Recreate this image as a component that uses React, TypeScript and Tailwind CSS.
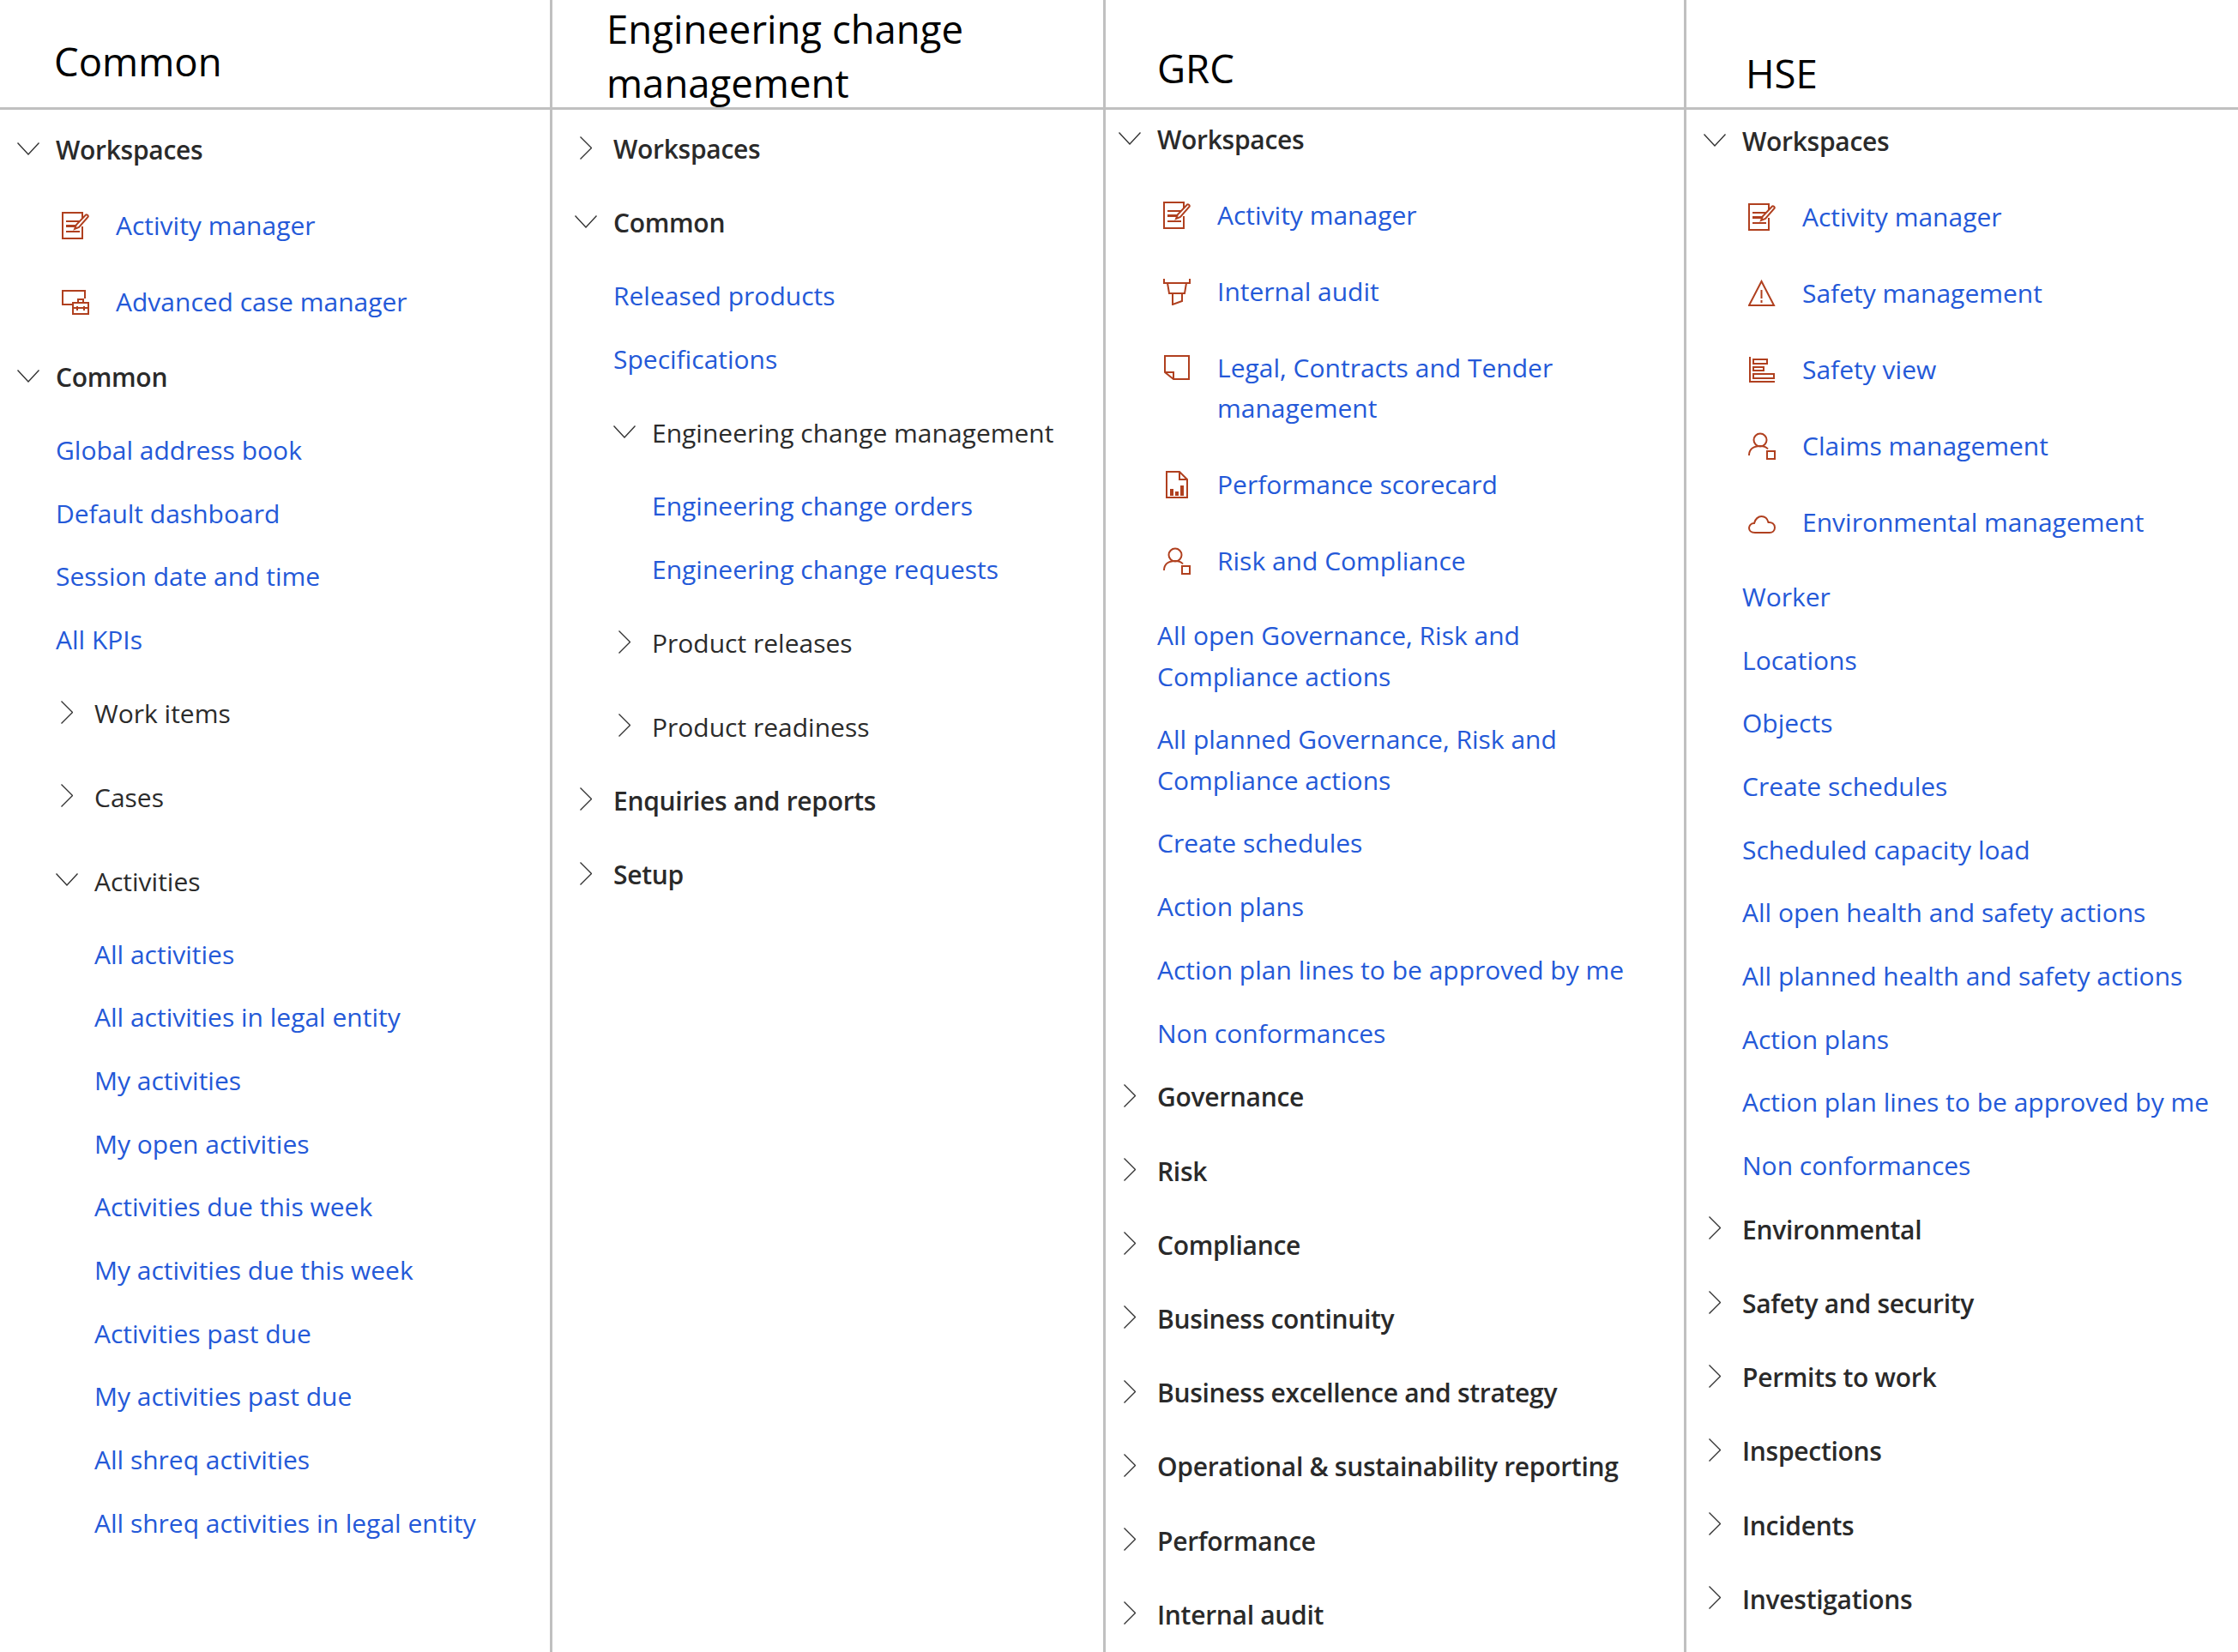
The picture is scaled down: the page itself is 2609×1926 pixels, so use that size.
import { ReactNode } from 'react';

type Row =
  | { kind: 'heading' | 'sub'; label: string; open?: boolean }
  | { kind: 'link' | 'sublink'; label: string }
  | { kind: 'icon'; label: string; icon: IconName };

type IconName = 'activity' | 'caseMgr' | 'audit' | 'note' | 'scorecard' | 'person' | 'warning' | 'view' | 'cloud';

interface Column {
  title: string;
  headerClass: string;
  bodyClass: string;
  rows: Row[];
}

const h = (label: string, open = false): Row => ({ kind: 'heading', label, open });
const s = (label: string, open = false): Row => ({ kind: 'sub', label, open });
const l = (label: string): Row => ({ kind: 'link', label });
const sl = (label: string): Row => ({ kind: 'sublink', label });
const i = (label: string, icon: IconName): Row => ({ kind: 'icon', label, icon });

const columns: Column[] = [
  {
    title: 'Common',
    headerClass: 'pt-[40px] pl-[63px]',
    bodyClass: 'pt-[23px] pl-[20px]',
    rows: [
      h('Workspaces', true),
      i('Activity manager', 'activity'),
      i('Advanced case manager', 'caseMgr'),
      h('Common', true),
      l('Global address book'),
      l('Default dashboard'),
      l('Session date and time'),
      l('All KPIs'),
      s('Work items'),
      s('Cases'),
      s('Activities', true),
      sl('All activities'),
      sl('All activities in legal entity'),
      sl('My activities'),
      sl('My open activities'),
      sl('Activities due this week'),
      sl('My activities due this week'),
      sl('Activities past due'),
      sl('My activities past due'),
      sl('All shreq activities'),
      sl('All shreq activities in legal entity'),
    ],
  },
  {
    title: 'Engineering change\nmanagement',
    headerClass: 'pt-[2px] pl-[63px]',
    bodyClass: 'pt-[22px] pl-[26px]',
    rows: [
      h('Workspaces'),
      h('Common', true),
      l('Released products'),
      l('Specifications'),
      s('Engineering change management', true),
      sl('Engineering change orders'),
      sl('Engineering change requests'),
      s('Product releases'),
      s('Product readiness'),
      h('Enquiries and reports'),
      h('Setup'),
    ],
  },
  {
    title: 'GRC',
    headerClass: 'pt-[48px] pl-[60px]',
    bodyClass: 'pt-[11px] pl-[15px]',
    rows: [
      h('Workspaces', true),
      i('Activity manager', 'activity'),
      i('Internal audit', 'audit'),
      i('Legal, Contracts and Tender\nmanagement', 'note'),
      i('Performance scorecard', 'scorecard'),
      i('Risk and Compliance', 'person'),
      l('All open Governance, Risk and\nCompliance actions'),
      l('All planned Governance, Risk and\nCompliance actions'),
      l('Create schedules'),
      l('Action plans'),
      l('Action plan lines to be approved by me'),
      l('Non conformances'),
      h('Governance'),
      h('Risk'),
      h('Compliance'),
      h('Business continuity'),
      h('Business excellence and strategy'),
      h('Operational & sustainability reporting'),
      h('Performance'),
      h('Internal audit'),
    ],
  },
  {
    title: 'HSE',
    headerClass: 'pt-[54px] pl-[69px]',
    bodyClass: 'pt-[13px] pl-[20px]',
    rows: [
      h('Workspaces', true),
      i('Activity manager', 'activity'),
      i('Safety management', 'warning'),
      i('Safety view', 'view'),
      i('Claims management', 'person'),
      i('Environmental management', 'cloud'),
      l('Worker'),
      l('Locations'),
      l('Objects'),
      l('Create schedules'),
      l('Scheduled capacity load'),
      l('All open health and safety actions'),
      l('All planned health and safety actions'),
      l('Action plans'),
      l('Action plan lines to be approved by me'),
      l('Non conformances'),
      h('Environmental'),
      h('Safety and security'),
      h('Permits to work'),
      h('Inspections'),
      h('Incidents'),
      h('Investigations'),
    ],
  },
];

const icons: Record<IconName, ReactNode> = {
  activity: (
    <>
      <path d="M24 8V1H1v30h23V17" />
      <path d="M5 11h16M5 23h16" />
      <path d="M5 15h11v3H5z" fill="currentColor" stroke="none" />
      <path d="M15 20l2-5L28 3.5c1-1 3.500 1 2.500 2.500L20 18z" />
    </>
  ),
  caseMgr: (
    <>
      <path d="M27 12V3H1v16h11" />
      <path d="M13 17h18v13H13zM13 23h18M19 17v-4h6v4M18 21v5M26 21v5" />
    </>
  ),
  audit: (
    <>
      <path d="M1 1v5h30V1" />
      <path d="M5 6l2 12h18l2-12" />
      <path d="M11 18v13l11-4v-9" />
    </>
  ),
  note: (
    <>
      <path d="M2 2h28v27H12L2 21z" />
      <path d="M2 21h10v8" />
    </>
  ),
  scorecard: (
    <>
      <path d="M4 1h15l9 9v21H4zM19 1v9h9" />
      <path d="M8 21h4v8H8zM14 24h4v5h-4zM20 17h4v12h-4z" fill="currentColor" stroke="none" />
    </>
  ),
  person: (
    <>
      <circle cx="14" cy="9" r="7.5" />
      <path d="M1 27c0-7 5-11 13-11 4 0 7 1 9 3.500" />
      <path d="M22 22h9v9h-9z" />
    </>
  ),
  warning: (
    <>
      <path d="M15.5 2L30 30H1z" />
      <path d="M15.5 12v10M15.5 24v3" />
    </>
  ),
  view: (
    <>
      <path d="M2 1v29h29" />
      <path d="M6 4h16v5H6zM6 13h12v4H6zM6 21h24v5H6z" />
    </>
  ),
  cloud: <path d="M8 28C3 28 1 25 1 22.5S3 17 7 17c1-5 5-8 8.500-8 4 0 7 3 8 7 4-.5 7.500 2 7.500 6S28 28 25 28z" />,
};

function RowIcon({ name }: { name: IconName }) {
  return (
    <svg viewBox="0 0 32 32" fill="none" stroke="currentColor" strokeWidth="2" className="w-[32px] h-[32px] shrink-0 text-[#b0401f] mr-[31px]">
      {icons[name]}
    </svg>
  );
}

function Chevron({ open }: { open?: boolean }) {
  return (
    <span className="w-[26px] h-[47px] mr-[19px] shrink-0 flex items-center justify-center pb-[3px]">
      {open ? (
        <svg viewBox="0 0 26 15" fill="none" stroke="#333333" strokeWidth="1.4" className="w-[26px] h-[15px]">
          <path d="M.5.5L13 14 25.500.5" />
        </svg>
      ) : (
        <svg viewBox="0 0 14 27" fill="none" stroke="#333333" strokeWidth="1.4" className="w-[14px] h-[27px]">
          <path d="M.5.5L13.500 13.500.5 26.500" />
        </svg>
      )}
    </span>
  );
}

function NavRow({ row, index, prev }: { row: Row; index: number; prev?: Row }) {
  const top = index === 0;
  switch (row.kind) {
    case 'heading':
      return (
        <div className={`flex font-semibold tracking-[-0.3px] text-[#2a2a2a] pb-[24.5px] ${top ? '' : 'pt-[14.3px]'}`}>
          <Chevron open={row.open} />
          <span>{row.label}</span>
        </div>
      );
    case 'sub':
      return (
        <div className="flex text-[#2b2b2b] pl-[45px] pt-[25.7px] pb-[24.5px]">
          <Chevron open={row.open} />
          <span>{row.label}</span>
        </div>
      );
    case 'icon':
      return (
        <div className={`flex pl-[52px] pb-[26.3px] ${prev?.kind === 'heading' ? 'pt-[16.1px]' : 'pt-[15.3px]'}`}>
          <div className="h-[47px] flex items-center">
            <RowIcon name={row.icon} />
          </div>
          <a href="#" className="text-[#2459d8] whitespace-pre-line">{row.label}</a>
        </div>
      );
    case 'link':
      return (
        <div className="pl-[45px] py-[13.15px]">
          <a href="#" className="text-[#2459d8] whitespace-pre-line">{row.label}</a>
        </div>
      );
    case 'sublink':
      return (
        <div className="pl-[90px] py-[13.15px]">
          <a href="#" className="text-[#2459d8]">{row.label}</a>
        </div>
      );
  }
}

export default function App() {
  return (
    <div className="grid grid-cols-[644px_645px_677px_643px] h-[1926px] w-[2609px] overflow-hidden bg-white font-['Open_Sans','Noto_Sans',sans-serif] text-[30px] leading-[47.4px]">
      {columns.map((col, c) => (
        <section key={col.title} className={`flex flex-col h-full ${c < 3 ? 'border-r-[3px] border-[#c0c0c0]' : ''}`}>
          <header className={`h-[128px] shrink-0 border-b-[3px] border-[#c0c0c0] text-black text-[45.5px] leading-[63px] whitespace-pre-line overflow-visible ${col.headerClass}`}>
            {col.title}
          </header>
          <div className={col.bodyClass}>
            {col.rows.map((row, idx) => (
              <NavRow key={idx} row={row} index={idx} prev={col.rows[idx - 1]} />
            ))}
          </div>
        </section>
      ))}
    </div>
  );
}
